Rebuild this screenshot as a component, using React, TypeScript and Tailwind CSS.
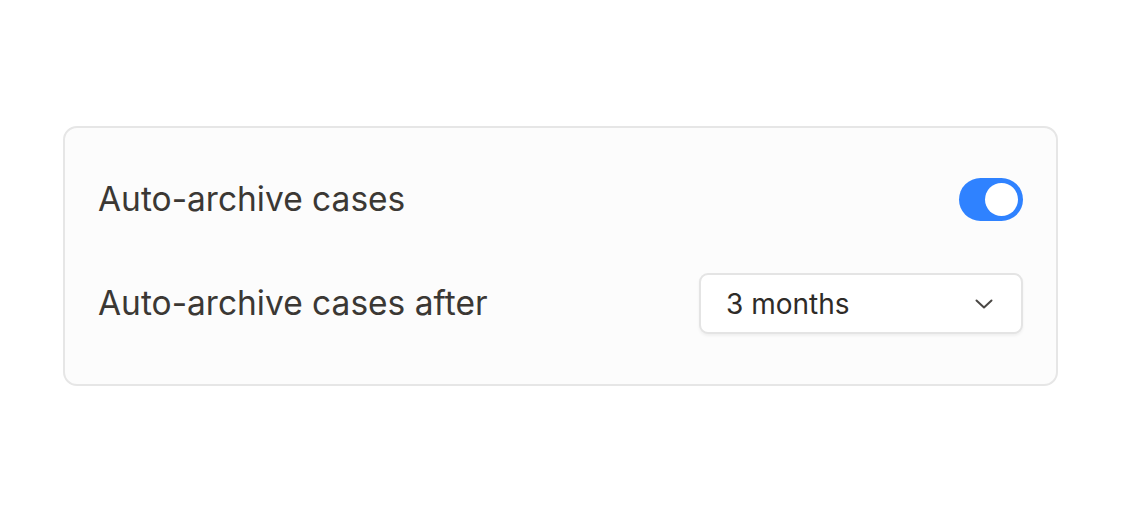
export default function App() {
  return (
    <div
      className="flex h-[512px] w-full items-center bg-white pl-[63px]"
      style={{ fontFamily: 'Inter, "Noto Sans", sans-serif' }}
    >
      <div className="flex w-[995px] flex-col gap-[43px] rounded-[14px] border-2 border-[#e6e6e6] bg-[#fcfcfc] pl-[33px] pr-[33px] pt-[41px] pb-[50px]">
        <div className="flex h-[61px] items-center justify-between">
          <span className="text-[33.5px] text-[#3b3834]">Auto-archive cases</span>
          <button className="flex h-[43px] w-[64px] items-center justify-end rounded-full bg-[#2f82ff] p-[5px]">
            <span className="h-[33px] w-[33px] rounded-full bg-white" />
          </button>
        </div>
        <div className="flex h-[61px] items-center justify-between">
          <span className="text-[33.5px] text-[#3b3834]">Auto-archive cases after</span>
          <button className="flex h-[61px] w-[324px] items-center justify-between rounded-[9px] border-2 border-[#e4e4e4] bg-white pl-[25px] pr-[28px] shadow-[0_2px_3px_rgba(0,0,0,0.05)]">
            <span className="text-[28px] text-[#2e2b28]">3 months</span>
            <svg width="18" height="10" viewBox="0 0 18 10" fill="none">
              <path d="M1.5 1.5L9 8.5L16.5 1.5" stroke="#4a4744" strokeWidth="2" strokeLinecap="round" strokeLinejoin="round" />
            </svg>
          </button>
        </div>
      </div>
    </div>
  );
}
